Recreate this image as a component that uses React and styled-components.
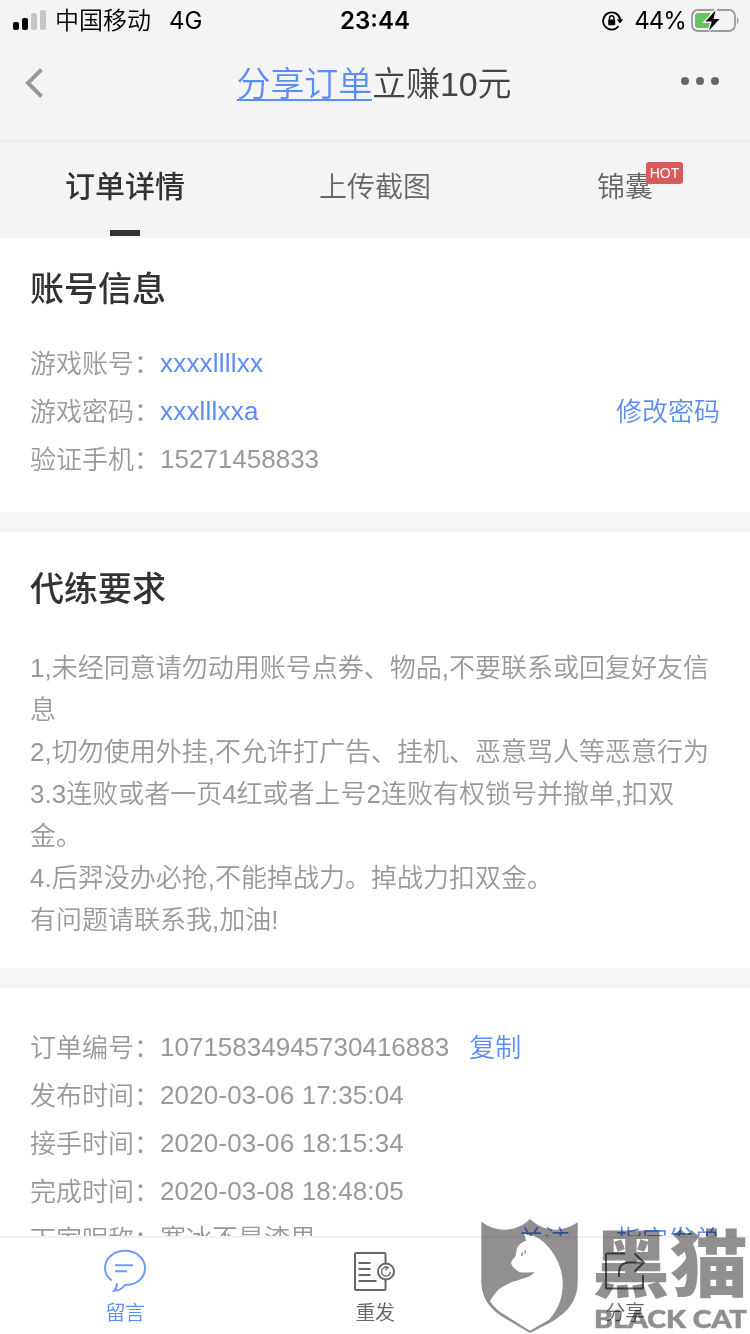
import React from 'react';
import styled, { createGlobalStyle, css } from 'styled-components';

const GlobalStyle = createGlobalStyle`
  * {
    box-sizing: border-box;
  }

  body {
    margin: 0;
    background: #ffffff;
    font-family: "Liberation Sans", "Noto Sans CJK SC", sans-serif;
    font-weight: 350;
  }
`;

const Page = styled.div`
  display: flex;
  flex-direction: column;
  width: 750px;
  height: 1334px;
  overflow: hidden;
  position: relative;
  background: #ffffff;
`;

const StatusBar = styled.div`
  display: grid;
  grid-template-columns: 1fr 90px 1fr;
  align-items: center;
  flex-shrink: 0;
  height: 40px;
  padding: 0 11px 0 13px;
  background: #f4f4f4;
  color: #000000;
  font-family: Inter, "Noto Sans CJK SC", sans-serif;
  font-size: 24px;
  font-weight: 400;
  line-height: 42px;
  white-space: nowrap;
`;

const StatusSide = styled.div`
  display: flex;
  align-items: center;
  justify-content: ${(props) => (props.$end ? 'flex-end' : 'flex-start')};
`;

const Carrier = styled.span`
  margin-left: 9px;
  font-weight: 350;
`;

const Network = styled.span`
  margin-left: 18px;
`;

const Clock = styled.div`
  padding-right: 2px;
  text-align: center;
  font-weight: 600;
`;

const Percent = styled.span`
  margin: 0 5px 0 10px;
  letter-spacing: -0.9px;
`;

const Header = styled.header`
  display: grid;
  grid-template-columns: 100px 1fr 100px;
  flex-shrink: 0;
  height: 102px;
  padding-bottom: 15px;
  align-items: center;
  background: #f4f4f4;
  border-bottom: 2px solid #ececec;
`;

const BackButton = styled.button`
  display: flex;
  padding: 0 0 0 24px;
  border: 0;
  background: none;
`;

const MoreButton = styled.button`
  display: flex;
  justify-content: flex-end;
  padding: 0 30px 4px 0;
  border: 0;
  background: none;
`;

const Title = styled.h1`
  margin: 0;
  padding: 3px 2px 0 0;
  text-align: center;
  font-size: 34px;
  font-weight: 350;
  line-height: 48px;
  letter-spacing: -0.1px;
  color: #444444;
`;

const ShareLink = styled.a`
  color: #5a8cfa;
  border-bottom: 2px solid #5a8cfa;
  display: inline-block;
  line-height: 29px;
`;

const Tabs = styled.nav`
  display: grid;
  grid-template-columns: repeat(3, 1fr);
  flex-shrink: 0;
  height: 96px;
  background: #f4f4f4;
`;

const Tab = styled.div`
  display: flex;
  flex-direction: column;
  align-items: center;
  justify-content: space-between;
  padding: 22px 0 2px;
  font-size: 28px;
  line-height: 48px;
  color: #666666;

  ${(props) =>
    props.$active &&
    css`
      padding-top: 21px;
      font-size: 30px;
      font-weight: 500;
      color: #333333;

      &::after {
        content: '';
        width: 30px;
        height: 6px;
        background: #333333;
      }
    `}
`;

const TabLabel = styled.span`
  position: relative;
`;

const HotBadge = styled.span`
  position: absolute;
  left: 49px;
  top: -2px;
  width: 37px;
  height: 22px;
  border-radius: 3px;
  background: #d65c59;
  color: #ffffff;
  font-size: 14px;
  line-height: 23px;
  text-align: center;
`;

const Content = styled.main`
  flex: 1;
  min-height: 0;
  overflow: hidden;
`;

const Section = styled.section`
  padding: ${(props) => props.$padding};
  border-bottom: 20px solid #f6f6f6;
`;

const SectionTitle = styled.h2`
  margin: 0;
  font-size: 34px;
  font-weight: 500;
  line-height: 50px;
  color: #333333;
`;

const AccountRows = styled.div`
  margin-top: 26px;
`;

const Row = styled.div`
  display: flex;
  height: 48px;
  font-size: 26px;
  line-height: 48px;
  color: #999999;
  white-space: nowrap;
`;

const Label = styled.span`
  width: 130px;
`;

const Value = styled.span`
  color: ${(props) => (props.$blue ? '#5a8cfa' : '#999999')};
  letter-spacing: ${(props) => props.$spacing || 'normal'};
  line-height: 46px;
`;

const Action = styled.a`
  margin-left: ${(props) => props.$gap || 'auto'};
  color: #5a8cfa;
`;

const Requirements = styled.div`
  margin-top: 33px;
  font-size: 26px;
  line-height: 42px;
  color: #999999;
  white-space: nowrap;
`;

const BottomBar = styled.footer`
  display: grid;
  grid-template-columns: repeat(3, 1fr);
  flex-shrink: 0;
  height: 98px;
  border-top: 2px solid #f3f3f3;
  background: #ffffff;
`;

const BottomItem = styled.div`
  display: flex;
  flex-direction: column;
  align-items: center;
  padding-top: 10px;
  font-size: 20px;
  line-height: 30px;
  letter-spacing: -0.5px;
  color: ${(props) => (props.$active ? '#5a8cfa' : '#666666')};

  svg {
    margin-bottom: 6px;
  }
`;

// Floats above the page in the bottom right corner
const Watermark = styled.div`
  position: absolute;
  right: 0;
  bottom: 0;
  display: flex;
  width: 270px;
  height: 116px;
  color: #918f90;
  mix-blend-mode: multiply;
`;

const WatermarkText = styled.div`
  display: flex;
  flex-direction: column;
  width: 155px;
  margin-left: 14px;
`;

const BrandName = styled.div`
  height: 88px;
  padding-top: 6px;
  font-family: "Noto Sans CJK SC", sans-serif;
  font-size: 78px;
  font-weight: 900;
  line-height: 76px;
  white-space: nowrap;
  transform: translateX(-2px) scaleY(0.93);
  transform-origin: 0 0;
`;

const BrandLatin = styled.div`
  font-family: Lato, sans-serif;
  font-size: 24px;
  font-weight: 900;
  line-height: 25px;
  white-space: nowrap;
  transform: scaleX(1.19);
  transform-origin: 0 0;
  -webkit-text-stroke: 0.6px #918f90;
`;

const SignalIcon = () => (
  <svg width="33" height="22" viewBox="0 0 33 22">
    <rect x="0" y="12" width="6" height="8" rx="2" fill="#000" />
    <rect x="9" y="8" width="6" height="12" rx="2" fill="#000" />
    <rect x="18" y="3" width="6" height="17" rx="2" fill="#c6c6c6" />
    <rect x="27" y="0" width="6" height="20" rx="2" fill="#c6c6c6" />
  </svg>
);

const RotationLockIcon = () => (
  <svg width="22" height="20" viewBox="0 0 22 20" fill="none">
    <path d="M18.200 8.500A8.600 8.600 0 1 0 16.500 15.300" stroke="#000" strokeWidth="1.800" />
    <path d="M14.800 8.200h6.400L18 12.400z" fill="#000" />
    <rect x="6.200" y="8.600" width="7" height="5.600" rx="0.800" fill="#000" />
    <path d="M7.500 9V7a2.200 2.200 0 0 1 4.400 0v2" stroke="#000" strokeWidth="1.400" />
  </svg>
);

const BatteryIcon = () => (
  <svg width="48" height="24" viewBox="0 0 48 24">
    <rect x="1" y="1" width="43" height="21" rx="6" fill="none" stroke="#9b9b9b" strokeWidth="1.800" />
    <path d="M46 8c2 .8 2 6.200 0 7z" fill="#9b9b9b" />
    <rect x="4" y="4" width="17" height="15" rx="3" fill="#64c466" />
    <path
      d="M24.500 1.500L14.500 12.500h6.300L18 21.500 28.500 10H22.500z"
      fill="#000"
      stroke="#f4f4f4"
      strokeWidth="2.800"
      paintOrder="stroke"
    />
  </svg>
);

const BackIcon = () => (
  <svg width="20" height="32" viewBox="0 0 20 32" fill="none">
    <path d="M17.500 2.500L4 16l13.500 13.500" stroke="#999" strokeWidth="4" />
  </svg>
);

const MoreIcon = () => (
  <svg width="40" height="10" viewBox="0 0 40 10" fill="#666">
    <circle cx="5" cy="5" r="4" />
    <circle cx="20" cy="5" r="4" />
    <circle cx="35" cy="5" r="4" />
  </svg>
);

const MessageIcon = () => (
  <svg width="44" height="44" viewBox="0 0 44 44" fill="none" stroke="#6f9cfb" strokeWidth="2">
    <path d="M8.700 32.500C4.500 29.300 2 24.800 2 20 2 10 11 2.800 22 2.800S42 10 42 20 34 37 22 37c-2 2.800-6 5.600-11 5.700 2.300-2 3-4.500 3-7.500" />
    <path d="M12 17.200h18M12 23.200h12" />
  </svg>
);

const RepostIcon = () => (
  <svg width="44" height="44" viewBox="0 0 44 44" fill="none" stroke="#666" strokeWidth="2">
    <path d="M32.500 15.500V6a1 1 0 0 0-1-1H3a1 1 0 0 0-1 1v35a1 1 0 0 0 1 1h28.500a1 1 0 0 0 1-1v-9.500" />
    <path d="M5.500 15h12M5.500 21h12M5.500 27h12M5.500 33h18" />
    <circle cx="33" cy="23.500" r="8" />
    <path d="M34 19.300a4.500 4.500 0 1 0 3.500 4.500M31.500 18.500l3.500.8-2.500 2.700" strokeWidth="1.300" />
  </svg>
);

const ShareIcon = () => (
  <svg width="44" height="44" viewBox="0 0 44 44" fill="none" stroke="#666" strokeWidth="2">
    <path d="M22 5.500H4a1 1 0 0 0-1 1v33a1 1 0 0 0 1 1h35a1 1 0 0 0 1-1V27" />
    <path d="M16 29v-5c0-6 4-9.500 10-9.500h15M31.500 5.500l9.500 9-9.500 9" />
  </svg>
);

const CatShield = () => (
  <svg width="100" height="116" viewBox="0 0 100 116">
    <path
      fill="currentColor"
      d="M1.300 3.700C17 15 36 14.500 50 1c14 13.500 32 14 47.700 3.300V64c0 20-12 32-28 41L50 115 27 101.500C11 92 1.300 82 1.300 62z"
    />
    <path
      fill="#fff"
      d="M44 15.300l5 2.200c4.500-.3 7.700 1.800 7.700 1.800C70 27 82.700 45 82.700 66c0 14-4.700 26-13.700 35.700L50 112.700 21.700 95c-5-3-9-8-11.700-11.700 3-6 7-11 11.700-14C31 63 42 61.500 48.300 58.700c3-1.200 5-3 6-4.700-6 .5-10 1-15.300 0-3-2-7-5-8-8.700.5-3 3-4.500 4.700-7.600.6-3 .4-6 2-9 2.300-3 5-5 8.300-6z"
    />
    <path d="M41 38c0-3.500 1.500-5.500 5-5.700.3 3-1.500 5.700-5 5.700z" fill="currentColor" />
    <path d="M43.200 32l.8 6" stroke="#fff" strokeWidth="1.800" />
  </svg>
);

const orderRows = [
  { label: '订单编号：', value: '10715834945730416883', action: '复制' },
  { label: '发布时间：', value: '2020-03-06 17:35:04', spacing: '0.13px' },
  { label: '接手时间：', value: '2020-03-06 18:15:34', spacing: '0.13px' },
  { label: '完成时间：', value: '2020-03-08 18:48:05', spacing: '0.13px' },
];

const requirements = [
  '1,未经同意请勿动用账号点券、物品,不要联系或回复好友信',
  '息',
  '2,切勿使用外挂,不允许打广告、挂机、恶意骂人等恶意行为',
  '3.3连败或者一页4红或者上号2连败有权锁号并撤单,扣双',
  '金。',
  '4.后羿没办必抢,不能掉战力。掉战力扣双金。',
  '有问题请联系我,加油!',
];

const App = () => {
  return (
    <Page>
      <GlobalStyle />

      <StatusBar>
        <StatusSide>
          <SignalIcon />
          <Carrier>中国移动</Carrier>
          <Network>4G</Network>
        </StatusSide>
        <Clock>23:44</Clock>
        <StatusSide $end>
          <RotationLockIcon />
          <Percent>44%</Percent>
          <BatteryIcon />
        </StatusSide>
      </StatusBar>

      <Header>
        <BackButton>
          <BackIcon />
        </BackButton>
        <Title>
          <ShareLink>分享订单</ShareLink>立赚10元
        </Title>
        <MoreButton>
          <MoreIcon />
        </MoreButton>
      </Header>

      <Tabs>
        <Tab $active>订单详情</Tab>
        <Tab>上传截图</Tab>
        <Tab>
          <TabLabel>
            锦囊<HotBadge>HOT</HotBadge>
          </TabLabel>
        </Tab>
      </Tabs>

      <Content>
        <Section $padding="26px 30px 28px">
          <SectionTitle>账号信息</SectionTitle>
          <AccountRows>
            <Row>
              <Label>游戏账号：</Label>
              <Value $blue $spacing="0.2px">xxxxllllxx</Value>
            </Row>
            <Row>
              <Label>游戏密码：</Label>
              <Value $blue $spacing="0.2px">xxxlllxxa</Value>
              <Action>修改密码</Action>
            </Row>
            <Row>
              <Label>验证手机：</Label>
              <Value>15271458833</Value>
            </Row>
          </AccountRows>
        </Section>

        <Section $padding="32px 30px 27px">
          <SectionTitle>代练要求</SectionTitle>
          <Requirements>
            {requirements.map((line) => (
              <div key={line}>{line}</div>
            ))}
          </Requirements>
        </Section>

        <Section $padding="36px 30px 0">
          {orderRows.map((row) => (
            <Row key={row.label}>
              <Label>{row.label}</Label>
              <Value $spacing={row.spacing}>{row.value}</Value>
              {row.action && <Action $gap="20px">{row.action}</Action>}
            </Row>
          ))}
          <Row>
            <Label>下家昵称：</Label>
            <Value>寒冰不是渣男</Value>
            <Action>关注</Action>
            <Action $gap="46px">指定发单</Action>
          </Row>
        </Section>
      </Content>

      <BottomBar>
        <BottomItem $active>
          <MessageIcon />
          留言
        </BottomItem>
        <BottomItem>
          <RepostIcon />
          重发
        </BottomItem>
        <BottomItem>
          <ShareIcon />
          分享
        </BottomItem>
      </BottomBar>

      <Watermark>
        <CatShield />
        <WatermarkText>
          <BrandName>黑猫</BrandName>
          <BrandLatin>BLACK CAT</BrandLatin>
        </WatermarkText>
      </Watermark>
    </Page>
  );
};

export default App;
